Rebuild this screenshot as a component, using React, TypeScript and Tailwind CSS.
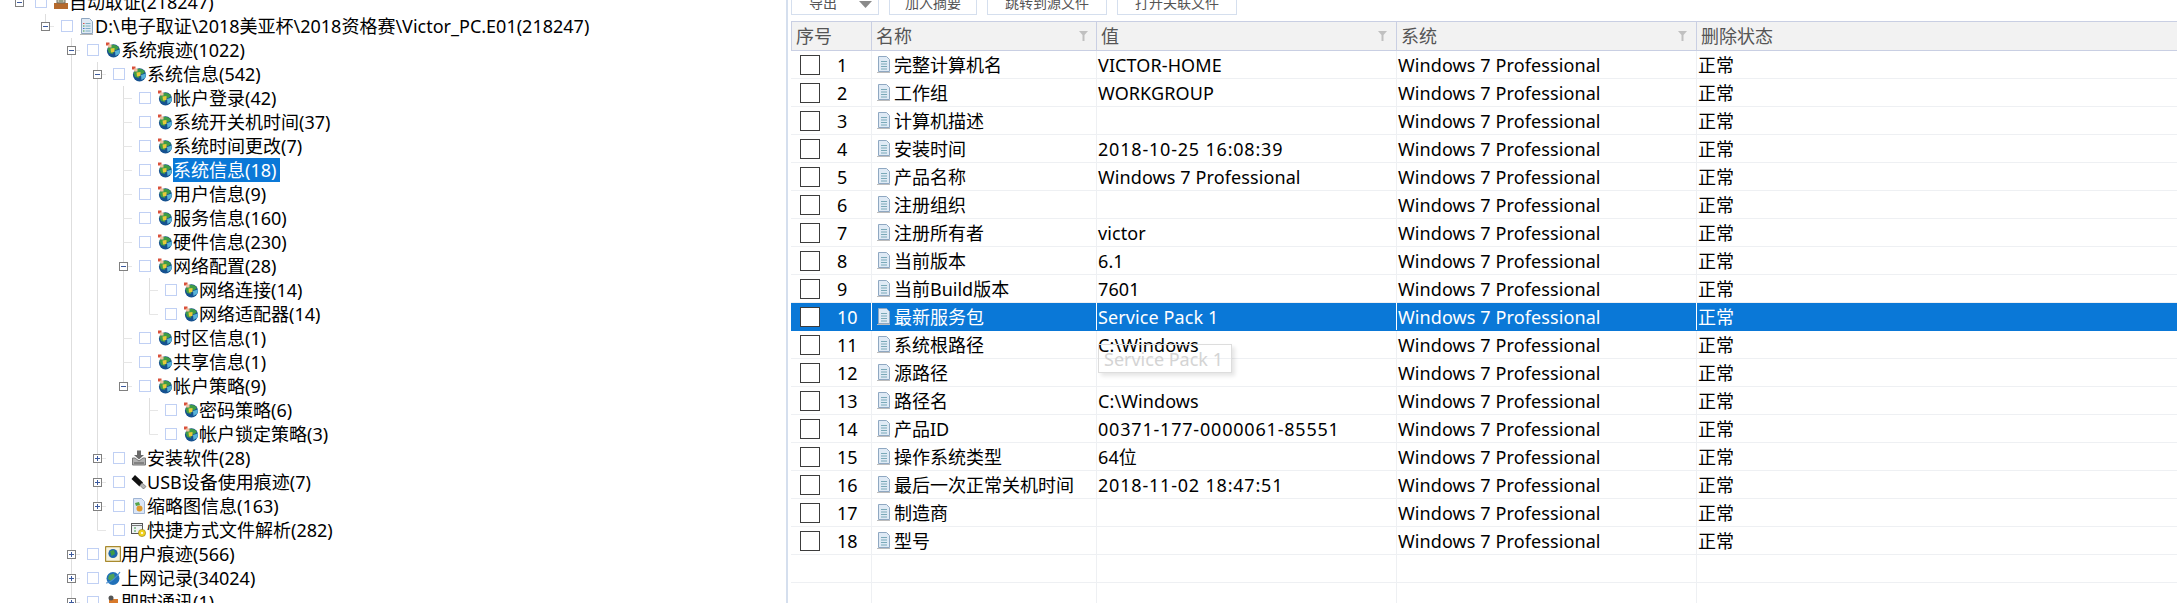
import React from 'react';

type Conn = 'none' | 'tee' | 'ell';
type IconName = 'box' | 'doc' | 'globe' | 'install' | 'usb' | 'thumb' | 'shortcut' | 'user' | 'web' | 'chat';

interface TreeRow {
  level: number;
  label: string;
  icon: IconName;
  conn: Conn;
  lines: number[];
  expander?: '-' | '+';
  selected?: boolean;
}

const treeRows: TreeRow[] = [
  { level: 0, label: '自动取证(218247)', icon: 'box', conn: 'none', lines: [], expander: '-' },
  { level: 1, label: 'D:\\电子取证\\2018美亚杯\\2018资格赛\\Victor_PC.E01(218247)', icon: 'doc', conn: 'ell', lines: [], expander: '-' },
  { level: 2, label: '系统痕迹(1022)', icon: 'globe', conn: 'tee', lines: [], expander: '-' },
  { level: 3, label: '系统信息(542)', icon: 'globe', conn: 'tee', lines: [2], expander: '-' },
  { level: 4, label: '帐户登录(42)', icon: 'globe', conn: 'tee', lines: [2, 3] },
  { level: 4, label: '系统开关机时间(37)', icon: 'globe', conn: 'tee', lines: [2, 3] },
  { level: 4, label: '系统时间更改(7)', icon: 'globe', conn: 'tee', lines: [2, 3] },
  { level: 4, label: '系统信息(18)', icon: 'globe', conn: 'tee', lines: [2, 3], selected: true },
  { level: 4, label: '用户信息(9)', icon: 'globe', conn: 'tee', lines: [2, 3] },
  { level: 4, label: '服务信息(160)', icon: 'globe', conn: 'tee', lines: [2, 3] },
  { level: 4, label: '硬件信息(230)', icon: 'globe', conn: 'tee', lines: [2, 3] },
  { level: 4, label: '网络配置(28)', icon: 'globe', conn: 'tee', lines: [2, 3], expander: '-' },
  { level: 5, label: '网络连接(14)', icon: 'globe', conn: 'tee', lines: [2, 3, 4] },
  { level: 5, label: '网络适配器(14)', icon: 'globe', conn: 'ell', lines: [2, 3, 4] },
  { level: 4, label: '时区信息(1)', icon: 'globe', conn: 'tee', lines: [2, 3] },
  { level: 4, label: '共享信息(1)', icon: 'globe', conn: 'tee', lines: [2, 3] },
  { level: 4, label: '帐户策略(9)', icon: 'globe', conn: 'ell', lines: [2, 3], expander: '-' },
  { level: 5, label: '密码策略(6)', icon: 'globe', conn: 'tee', lines: [2, 3] },
  { level: 5, label: '帐户锁定策略(3)', icon: 'globe', conn: 'ell', lines: [2, 3] },
  { level: 3, label: '安装软件(28)', icon: 'install', conn: 'tee', lines: [2], expander: '+' },
  { level: 3, label: 'USB设备使用痕迹(7)', icon: 'usb', conn: 'tee', lines: [2], expander: '+' },
  { level: 3, label: '缩略图信息(163)', icon: 'thumb', conn: 'tee', lines: [2], expander: '+' },
  { level: 3, label: '快捷方式文件解析(282)', icon: 'shortcut', conn: 'ell', lines: [2] },
  { level: 2, label: '用户痕迹(566)', icon: 'user', conn: 'tee', lines: [], expander: '+' },
  { level: 2, label: '上网记录(34024)', icon: 'web', conn: 'tee', lines: [], expander: '+' },
  { level: 2, label: '即时通讯(1)', icon: 'chat', conn: 'tee', lines: [], expander: '+' },
];

// name, value, wide = long digit strings that run wider in the reference
const tableRows: [string, string, boolean?][] = [
  ['完整计算机名', 'VICTOR-HOME'],
  ['工作组', 'WORKGROUP'],
  ['计算机描述', ''],
  ['安装时间', '2018-10-25 16:08:39', true],
  ['产品名称', 'Windows 7 Professional'],
  ['注册组织', ''],
  ['注册所有者', 'victor'],
  ['当前版本', '6.1'],
  ['当前Build版本', '7601'],
  ['最新服务包', 'Service Pack 1'],
  ['系统根路径', 'C:\\Windows'],
  ['源路径', ''],
  ['路径名', 'C:\\Windows'],
  ['产品ID', '00371-177-0000061-85551', true],
  ['操作系统类型', '64位'],
  ['最后一次正常关机时间', '2018-11-02 18:47:51', true],
  ['制造商', ''],
  ['型号', ''],
];

// Tree guide for one indent column
const Guide: React.FC<{ through?: boolean; conn?: Conn; expander?: '-' | '+' }> = ({ through, conn, expander }) => (
  <svg width="26" height="24" className="shrink-0">
    {through && <line x1="13.5" y1="0" x2="13.5" y2="24" stroke="#dedede" />}
    {conn === 'tee' && <line x1="13.5" y1="0" x2="13.5" y2="24" stroke="#dedede" />}
    {conn === 'ell' && <line x1="13.5" y1="0" x2="13.5" y2="12.5" stroke="#dedede" />}
    {conn && conn !== 'none' && <line x1="13.5" y1="12.5" x2="22" y2="12.5" stroke="#e6e6e6" />}
    {expander && (
      <>
        <rect x="9.5" y="8.5" width="8" height="8" fill="#ffffff" stroke="#808080" />
        <line x1="11" y1="12.5" x2="16" y2="12.5" stroke="#3c5a9e" />
        {expander === '+' && <line x1="13.5" y1="10" x2="13.5" y2="15" stroke="#3c5a9e" />}
      </>
    )}
  </svg>
);

const TreeIcon: React.FC<{ name: IconName }> = ({ name }) => {
  if (name === 'globe') {
    return (
      <svg width="16" height="16" viewBox="0 0 16 16" className="shrink-0">
        <circle cx="8.5" cy="8.8" r="6.6" fill="#15518f" />
        <path d="M5 3.5 C8 2 12 3 14 6 L11.5 8 L8.5 8.5 L8 12 L4 11 L2.5 7 Z" fill="#3f9c46" />
        <path d="M10 9 L15 7.5 L14.5 11.5 L10.5 14 Z" fill="#58b3d8" />
        <path d="M5.5 6.5 L9.5 6 L9.5 10 L6 10.5 Z" fill="#e8c93a" />
        <path d="M1 0.5 H4.5 V3.5 H1 Z" fill="#d9503a" />
        <path d="M3 2.5 H6.5 V5.5 H3 Z" fill="#eec0a0" />
      </svg>
    );
  }
  if (name === 'doc') {
    return (
      <svg width="16" height="18" viewBox="0 0 16 18" className="shrink-0">
        <path d="M2.5 1.5 H10.5 L13.5 4.5 V16.5 H2.5 Z" fill="#dfe9f4" stroke="#8ea6c0" />
        <path d="M6.5 6.5 H11.5 M6.5 9 H11.5 M6.5 11.5 H11.5 M6.5 14 H11.5" stroke="#7fb0c4" />
        <path d="M4 6.5 H5.5" stroke="#d8504a" />
        <path d="M4 9 H5.5" stroke="#3f9c46" />
        <path d="M4 11.5 H5.5" stroke="#3f6fd0" />
        <path d="M4 14 H5.5" stroke="#3f9c46" />
        <path d="M1 17.5 H14" stroke="#b8b8b8" />
      </svg>
    );
  }
  if (name === 'box') {
    return (
      <svg width="16" height="16" viewBox="0 0 16 16" className="shrink-0">
        <path d="M1 9 H15 V15 H1 Z" fill="#b5692c" />
        <path d="M4 1 H12 V9 H4 Z" fill="#c9c4b4" stroke="#6d6a5c" />
        <path d="M7 2 V8 M9 2 V8" stroke="#5f7d5a" />
      </svg>
    );
  }
  if (name === 'install') {
    return (
      <svg width="16" height="16" viewBox="0 0 16 16" className="shrink-0">
        <path d="M6 0.5 H10 V5 H13 L8 9.5 L3 5 H6 Z" fill="#6a6a6a" />
        <path d="M1.5 8 H4 L8 11 L12 8 H14.5 V15 H1.5 Z" fill="#b0b0b0" stroke="#777777" />
        <path d="M3 13 H13" stroke="#555555" />
      </svg>
    );
  }
  if (name === 'usb') {
    return (
      <svg width="16" height="16" viewBox="0 0 16 16" className="shrink-0">
        <path d="M0.5 5 L4 1 L12 8.5 L8.5 12.5 Z" fill="#111111" />
        <path d="M11 9 L9 11.5 L12.5 15 L15 12.5 Z" fill="#b8b8b8" stroke="#666666" strokeWidth="0.7" />
      </svg>
    );
  }
  if (name === 'thumb') {
    return (
      <svg width="16" height="18" viewBox="0 0 16 18" className="shrink-0">
        <path d="M2.5 1.5 H10.5 L13.5 4.5 V16.5 H2.5 Z" fill="#dbe6f6" stroke="#9fb4d4" />
        <circle cx="8.5" cy="11.5" r="3" fill="#e09a2c" />
        <path d="M4 6 L8 5 L9 8 L5 9 Z" fill="#55a54a" />
      </svg>
    );
  }
  if (name === 'shortcut') {
    return (
      <svg width="16" height="16" viewBox="0 0 16 16" className="shrink-0">
        <rect x="0.5" y="1.5" width="11" height="10" fill="#eef2f4" stroke="#555555" />
        <path d="M0.5 3.5 H11.5" stroke="#777777" />
        <path d="M3 6 H5 M3 9 H5" stroke="#3f9c46" />
        <circle cx="11" cy="11" r="3.6" fill="#f2d21f" stroke="#8d7a10" strokeWidth="0.6" />
        <circle cx="11" cy="11" r="1.1" fill="#ffffff" />
      </svg>
    );
  }
  if (name === 'user') {
    return (
      <svg width="16" height="16" viewBox="0 0 16 16" className="shrink-0">
        <rect x="0.5" y="0.5" width="15" height="15" rx="1" fill="#f7f3df" stroke="#a98a2e" strokeWidth="1.4" />
        <circle cx="8" cy="7.5" r="4.6" fill="#1c66ad" />
        <path d="M5 5 L9 4 L10 8 L6.5 10 Z" fill="#3f9c46" />
      </svg>
    );
  }
  if (name === 'web') {
    return (
      <svg width="16" height="16" viewBox="0 0 16 16" className="shrink-0">
        <circle cx="8" cy="8.5" r="6.5" fill="#2070b8" />
        <path d="M4 5 L9 3.5 L10 8 L6 11 L3 9 Z" fill="#4fa25a" />
        <path d="M1 13 C5 13 12 7 15 2" fill="none" stroke="#4a8fd0" strokeWidth="1.2" />
      </svg>
    );
  }
  return (
    <svg width="16" height="16" viewBox="0 0 16 16" className="shrink-0">
      <path d="M4 5 H13 V14 H4 Z" fill="#d97a2b" />
      <circle cx="6" cy="4" r="2.5" fill="#555555" />
    </svg>
  );
};

const RowDoc: React.FC = () => (
  <svg width="14" height="17" viewBox="0 0 14 17" className="shrink-0">
    <path d="M1.5 0.5 H9.5 L12.5 3.5 V15.5 H1.5 Z" fill="#dfeaf5" stroke="#8fa8c2" />
    <path d="M4 5.5 H10 M4 8 H10 M4 10.5 H10 M4 13 H10" stroke="#7aa9b8" />
    <path d="M0 16.5 H13" stroke="#bdbdbd" />
  </svg>
);

const Funnel: React.FC = () => (
  <svg width="9" height="10" viewBox="0 0 9 10" className="shrink-0">
    <path d="M0 0 H9 L5.5 4 V10 H3.5 V4 Z" fill="#c0c0c0" />
  </svg>
);

const Tree: React.FC = () => (
  <div className="-mt-[10px] w-[786px] shrink-0">
    {treeRows.map((row) => {
      const slots = Array.from({ length: row.level }, (_, i) => i);
      return (
        <div key={row.label} className="flex h-[24px] items-center pl-[6px]">
          {slots.map((i) => (
            <Guide key={i} through={row.lines.includes(i)} />
          ))}
          <Guide conn={row.conn} expander={row.expander} />
          <span className="ml-[3px] h-[12px] w-[12px] shrink-0 border border-[#c0d0f4]" />
          <span className="ml-[6px] flex w-[16px] shrink-0 justify-start">
            <TreeIcon name={row.icon} />
          </span>
          <span className={`flex h-[24px] items-center whitespace-nowrap ${row.selected ? 'bg-[#0a78d7] pr-[4px] text-white' : 'text-black'}`}>
            {row.label}
          </span>
        </div>
      );
    })}
  </div>
);

const toolbarButtons = ['加入摘要', '跳转到源文件', '打开关联文件'];

const Toolbar: React.FC = () => (
  <div className="-mt-[9px] flex h-[24px] shrink-0 gap-[10px] text-[14px] text-[#555555]">
    <div className="flex w-[88px] items-center justify-between border border-[#d5dfee] pl-[17px] pr-[6px]">
      <span>导出</span>
      <svg width="13" height="9" viewBox="0 0 13 9">
        <path d="M0 2 H13 L6.5 9 Z" fill="#8a8a8a" />
      </svg>
    </div>
    {toolbarButtons.map((label, i) => (
      <div key={label} className={`flex items-center justify-center border border-[#d5dfee] ${i === 0 ? 'w-[88px]' : 'w-[120px]'}`}>
        {label}
      </div>
    ))}
  </div>
);

const DataTable: React.FC = () => (
  <div className="mt-[6px] flex shrink-0 flex-col">
    <div className="flex h-[30px] border-y border-[#c9cfe3] bg-[#f2f2f2] text-[#555555]">
      <div className="flex w-[81px] shrink-0 items-center border-x border-[#c9cfe3] pl-[4px]">序号</div>
      <div className="flex w-[225px] shrink-0 items-center justify-between border-r border-[#c9cfe3] pl-[4px] pr-[8px]">
        名称
        <Funnel />
      </div>
      <div className="flex w-[300px] shrink-0 items-center justify-between border-r border-[#c9cfe3] pl-[4px] pr-[9px]">
        值
        <Funnel />
      </div>
      <div className="flex w-[300px] shrink-0 items-center justify-between border-r border-[#c9cfe3] pl-[4px] pr-[9px]">
        系统
        <Funnel />
      </div>
      <div className="flex flex-1 items-center pl-[4px]">删除状态</div>
    </div>
    {tableRows.map(([name, value, wide], i) => {
      const selected = i === 9;
      const divider = selected ? 'border-white' : 'border-[#eef0f3]';
      return (
        <div key={name} className={`flex h-[28px] border-b ${selected ? 'border-[#0a78d7] bg-[#0a78d7] text-white' : 'border-[#eef0f3] text-black'}`}>
          <div className={`flex w-[81px] shrink-0 items-center border-r pl-[9px] ${divider}`}>
            <span className="h-[20px] w-[20px] shrink-0 border-[1.5px] border-[#3c3c3c] bg-white" />
            <span className="ml-[17px]">{i + 1}</span>
          </div>
          <div className={`flex w-[225px] shrink-0 items-center border-r pl-[5px] ${divider}`}>
            <RowDoc />
            <span className="ml-[3px] whitespace-nowrap">{name}</span>
          </div>
          <div className={`flex w-[300px] shrink-0 items-center border-r pl-[1px] ${divider} ${wide ? 'tracking-[0.8px]' : 'tracking-[0.1px]'}`}>{value}</div>
          <div className={`flex w-[300px] shrink-0 items-center border-r pl-[1px] tracking-[0.1px] ${divider}`}>Windows 7 Professional</div>
          <div className="flex flex-1 items-center pl-[1px]">正常</div>
        </div>
      );
    })}
    <div className="flex h-[28px] border-b border-[#eef0f3]">
      <div className="w-[81px] shrink-0 border-r border-[#eef0f3]" />
      <div className="w-[225px] shrink-0 border-r border-[#eef0f3]" />
      <div className="w-[300px] shrink-0 border-r border-[#eef0f3]" />
      <div className="w-[300px] shrink-0 border-r border-[#eef0f3]" />
    </div>
    <div className="flex h-[28px]">
      <div className="w-[81px] shrink-0 border-r border-[#eef0f3]" />
      <div className="w-[225px] shrink-0 border-r border-[#eef0f3]" />
      <div className="w-[300px] shrink-0 border-r border-[#eef0f3]" />
      <div className="w-[300px] shrink-0 border-r border-[#eef0f3]" />
    </div>
  </div>
);

const App: React.FC = () => (
  <div
    className="relative flex h-[603px] w-[2177px] overflow-hidden bg-white text-[18px] leading-none"
    style={{ fontFamily: '"Noto Sans", "Noto Sans CJK SC", sans-serif' }}
  >
    <Tree />
    <div className="flex min-w-0 flex-1 flex-col border-l-2 border-[#d5dfee] pl-[3px]">
      <Toolbar />
      <DataTable />
    </div>
    {/* drag ghost of the selected cell, see-through so the row below stays readable */}
    <div className="absolute left-[1098px] top-[344px] flex h-[29px] w-[134px] items-center border border-[#dddddd] pl-[5px] text-[#d4d4d4] shadow-[3px_3px_4px_rgba(0,0,0,0.1)]">
      Service Pack 1
    </div>
  </div>
);

export default App;
